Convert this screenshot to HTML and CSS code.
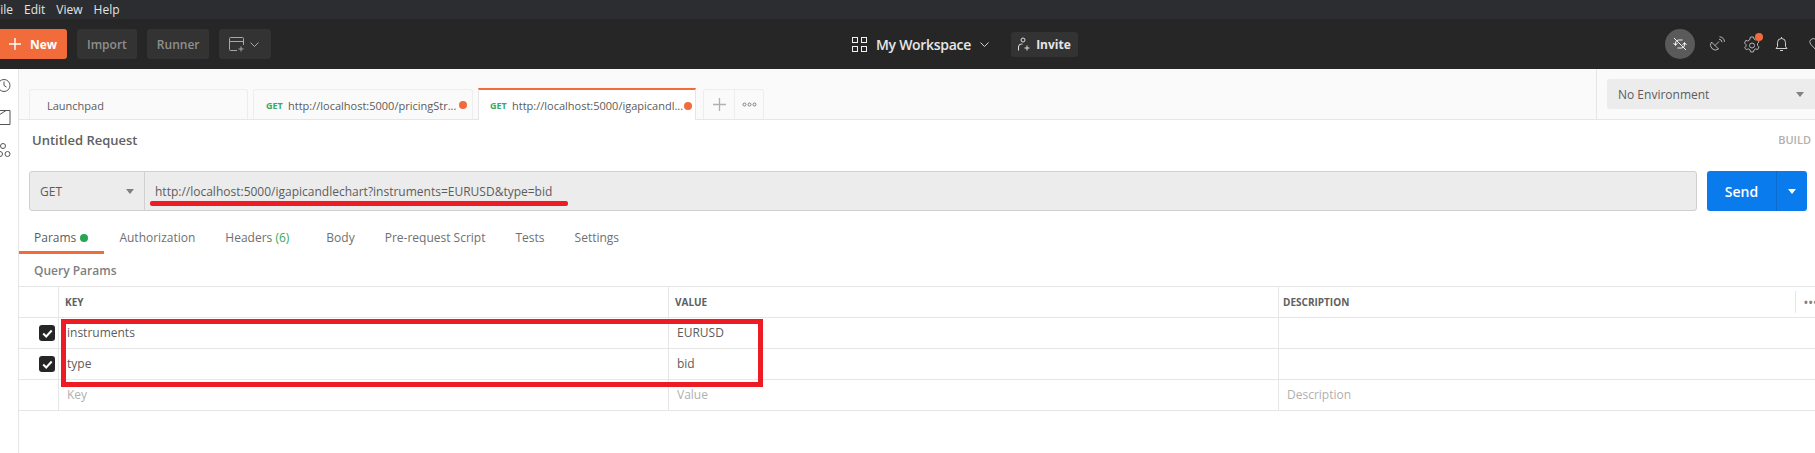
FILE: index.html
```html
<!DOCTYPE html>
<html>
<head>
    <title>Postman</title>
    <link rel="stylesheet" href="styles.css">
</head>
<body>
    <div class="menu-bar">
        <span class="menu-file">File</span>
        <span>Edit</span>
        <span>View</span>
        <span>Help</span>
    </div>

    <div class="top-bar">
        <div class="top-left">
            <button class="btn-new">
                <svg width="14" height="14" viewBox="0 0 14 14"><path d="M7 1v12M1 7h12" stroke="#fff" stroke-width="1.4" fill="none"/></svg>
                New
            </button>
            <button class="btn-dark">Import</button>
            <button class="btn-dark">Runner</button>
            <button class="btn-dark btn-window">
                <svg width="16" height="15" viewBox="0 0 16 15" fill="none" stroke="#a8a8a8"><path d="M8 13.5H1.5a1 1 0 0 1-1-1v-11a1 1 0 0 1 1-1h12a1 1 0 0 1 1 1V8M.5 4.5h14M12 9.5v5M9.5 12h5"/></svg>
                <svg width="9" height="5" viewBox="0 0 9 5" fill="none" stroke="#a8a8a8"><path d="M.5.5l4 4 4-4"/></svg>
            </button>
        </div>
        <div class="workspace">
            <svg class="ws-icon" width="15" height="15" viewBox="0 0 15 15" fill="none" stroke="#f0f0f0"><rect x=".5" y=".5" width="5" height="5"/><rect x="9.5" y=".5" width="5" height="5"/><rect x=".5" y="9.5" width="5" height="5"/><rect x="9.5" y="9.5" width="5" height="5"/></svg>
            <span class="ws-name">My Workspace</span>
            <svg width="9" height="5" viewBox="0 0 9 5" fill="none" stroke="#d0d0d0"><path d="M.5.5l4 4 4-4"/></svg>
            <button class="btn-invite">
                <svg width="12" height="14" viewBox="0 0 12 14" fill="none" stroke="#e0e0e0"><circle cx="5" cy="3" r="2"/><path d="M.5 13.5V10a3 3 0 0 1 3-3h1M9 8.5v5M6.5 11h5"/></svg>
                Invite
            </button>
        </div>
        <div class="top-right">
            <span class="sync-off">
                <svg width="16" height="14" viewBox="0 0 16 14" fill="none" stroke="#f0f0f0"><path d="M2 1l12 12M3.500 8V6a3 3 0 0 1 3-3h4M1.500 6l2 2.500 2-2.500M12.500 6v2a3 3 0 0 1-3 3h-4M10.500 8l2-2.500 2 2.500"/></svg>
            </span>
            <svg class="ico-sat" width="16" height="16" viewBox="0 0 16 16" fill="none" stroke="#b5b5b5"><path d="M2.500 6a5 5 0 0 0 7 7zM6 9.500l4-4M10 3.200a3.200 3.200 0 0 1 3 3M10.500.8a5.500 5.500 0 0 1 5 5"/></svg>
            <span class="gear-wrap">
                <svg width="16" height="17" viewBox="0 0 16 17" fill="none" stroke="#b5b5b5"><path d="M6.500 1h3l.5 2 1.700 1 2-.6 1.300 2.600-1.500 1.500v1.900l1.500 1.500-1.300 2.600-2-.6-1.700 1-.5 2h-3l-.5-2-1.700-1-2 .6L.5 11.900 2 10.400V8.500L.5 7l1.300-2.600 2 .6L5.500 4z"/><circle cx="8" cy="9.500" r="2.500"/></svg>
                <span class="gear-badge"></span>
            </span>
            <svg class="ico-bell" width="13" height="16" viewBox="0 0 13 16" fill="none" stroke="#d0d0d0"><path d="M1 12.500h11l-1.500-2V6.500a4 4 0 0 0-8 0v4zM5 14.500h3M6.500 1v1.500"/></svg>
            <svg class="ico-heart" width="14" height="14" viewBox="0 0 14 14" fill="none" stroke="#b5b5b5"><path d="M7 13L1.500 7a3.300 3.300 0 0 1 5.500-4 3.300 3.300 0 0 1 5.500 4z"/></svg>
        </div>
    </div>

    <div class="main">
        <div class="sidebar">
            <svg width="11" height="15" viewBox="0 0 11 15" fill="none" stroke="#555"><circle cx="4" cy="7.500" r="6"/><path d="M4 3.500V7.500l2.500 1.500"/></svg>
            <svg width="11" height="15" viewBox="0 0 11 15" fill="none" stroke="#555"><path d="M-1 .5h11v14h-11M-1 5l7-4.500"/></svg>
            <svg width="11" height="17" viewBox="0 0 11 17" fill="none" stroke="#555"><circle cx="3" cy="4" r="2.500"/><circle cx="0" cy="12" r="2.500"/><circle cx="7.500" cy="12" r="2.500"/></svg>
        </div>

        <div class="content">
            <div class="tab-strip">
                <div class="tabs">
                    <div class="tab tab-launchpad">Launchpad</div>
                    <div class="tab tab-req tab-pricing">
                        <span class="get">GET</span>
                        <span class="tab-url">http://localhost:5000/pricingStr...</span>
                        <span class="dot"></span>
                    </div>
                    <div class="tab tab-req tab-active">
                        <span class="get">GET</span>
                        <span class="tab-url">http://localhost:5000/igapicandl...</span>
                        <span class="dot"></span>
                    </div>
                    <div class="tab-tools">
                        <span class="tool">
                            <svg width="15" height="15" viewBox="0 0 15 15"><path d="M7.500 1v13M1 7.500h13" stroke="#b0b0b0" stroke-width="1.300" fill="none"/></svg>
                        </span>
                        <span class="tool tool-more">
                            <svg width="15" height="5" viewBox="0 0 15 5" fill="none" stroke="#808080"><circle cx="2.500" cy="2.500" r="1.500"/><circle cx="7.500" cy="2.500" r="1.500"/><circle cx="12.500" cy="2.500" r="1.500"/></svg>
                        </span>
                    </div>
                </div>
                <div class="env-box">
                    <div class="env-select">
                        <span>No Environment</span>
                        <span class="caret"></span>
                    </div>
                </div>
            </div>

            <div class="title-row">
                <span class="req-title">Untitled Request</span>
                <span class="build">BUILD</span>
            </div>

            <div class="url-row">
                <div class="url-bar">
                    <div class="method"><span>GET</span><span class="caret"></span></div>
                    <div class="url-text">http://localhost:5000/igapicandlechart?instruments=EURUSD&amp;type=bid</div>
                </div>
                <div class="send">
                    <span class="send-label">Send</span>
                    <span class="send-drop"><span class="caret caret-white"></span></span>
                </div>
            </div>

            <div class="req-tabs">
                <span class="req-tab req-tab-active">Params <i class="green-dot"></i></span>
                <span class="req-tab">Authorization</span>
                <span class="req-tab">Headers <em>(6)</em></span>
                <span class="req-tab">Body</span>
                <span class="req-tab">Pre-request Script</span>
                <span class="req-tab">Tests</span>
                <span class="req-tab">Settings</span>
            </div>

            <div class="query-title">Query Params</div>

            <div class="params">
                <div class="row row-head">
                    <div class="cell cell-check"></div>
                    <div class="cell">KEY</div>
                    <div class="cell">VALUE</div>
                    <div class="cell cell-desc">
                        <span>DESCRIPTION</span>
                        <span class="more-dots">•••</span>
                    </div>
                </div>
                <div class="row">
                    <div class="cell cell-check"><span class="check"><svg width="11" height="9" viewBox="0 0 11 9"><path d="M1.200 4.500l3 3 5.500-6" stroke="#fff" stroke-width="2" fill="none"/></svg></span></div>
                    <div class="cell">instruments</div>
                    <div class="cell">EURUSD</div>
                    <div class="cell"></div>
                </div>
                <div class="row">
                    <div class="cell cell-check"><span class="check"><svg width="11" height="9" viewBox="0 0 11 9"><path d="M1.200 4.500l3 3 5.500-6" stroke="#fff" stroke-width="2" fill="none"/></svg></span></div>
                    <div class="cell">type</div>
                    <div class="cell">bid</div>
                    <div class="cell"></div>
                </div>
                <div class="row row-empty">
                    <div class="cell cell-check"></div>
                    <div class="cell">Key</div>
                    <div class="cell">Value</div>
                    <div class="cell">Description</div>
                </div>
            </div>
        </div>
    </div>

    <!-- red marks drawn on top of the screenshot -->
    <div class="mark-line"></div>
    <div class="mark-box"></div>
</body>
</html>
```

FILE: styles.css
```css
html, body {
    margin: 0;
    height: 453px;
    overflow: hidden;
}
body {
    position: relative;
    width: 1815px;
    font-family: "Open Sans", "Liberation Sans", sans-serif;
    font-size: 12px;
    color: #5c5c5c;
    background: #fff;
}
button {
    font-family: inherit;
    border: 0;
    padding: 0;
}

/* title bar */
.menu-bar {
    height: 19px;
    background: #2b2d30;
    color: #e4e4e4;
    display: flex;
    align-items: center;
    gap: 11px;
    font-size: 12px;
}
.menu-file {
    margin-left: -6px;
}

/* header */
.top-bar {
    height: 50px;
    background: #262626;
    display: flex;
    align-items: center;
}
.top-left {
    display: flex;
    align-items: center;
    gap: 10px;
    width: 852px;
    flex: none;
}
.btn-new {
    width: 67px;
    height: 30px;
    background: #f26b3a;
    color: #fff;
    font-size: 12px;
    font-weight: 700;
    border-radius: 0 3px 3px 0;
    display: flex;
    align-items: center;
    justify-content: flex-end;
    gap: 8px;
    padding-right: 10px;
    box-sizing: border-box;
}
.btn-dark {
    height: 30px;
    padding: 0 10px;
    background: #333;
    color: #8f8f8f;
    font-size: 12px;
    font-weight: 600;
    border-radius: 3px;
}
.btn-window {
    width: 52px;
    display: flex;
    align-items: center;
    gap: 5px;
}
.workspace {
    display: flex;
    align-items: center;
    width: 813px;
    flex: none;
}
.ws-icon {
    margin-right: 9px;
}
.ws-name {
    color: #e6e6e6;
    font-size: 14px;
    font-weight: 600;
    letter-spacing: -0.3px;
    margin-right: 9px;
}
.btn-invite {
    margin-left: 22px;
    width: 67px;
    height: 25px;
    background: #333;
    color: #e6e6e6;
    font-size: 12px;
    font-weight: 700;
    border-radius: 3px;
    display: flex;
    align-items: center;
    justify-content: center;
    gap: 6px;
}
.top-right {
    display: flex;
    align-items: center;
    flex: none;
}
.sync-off {
    width: 30px;
    height: 30px;
    border-radius: 50%;
    background: #5a5a5a;
    display: flex;
    align-items: center;
    justify-content: center;
}
.ico-sat {
    margin-left: 14px;
}
.gear-wrap {
    position: relative;
    margin-left: 19px;
    display: flex;
}
.gear-badge {
    position: absolute;
    top: -3px;
    right: -3px;
    width: 8px;
    height: 8px;
    border-radius: 50%;
    background: #f26b3a;
}
.ico-bell {
    margin-left: 15px;
}
.ico-heart {
    margin-left: 21px;
    flex: none;
}

/* main area */
.main {
    display: flex;
    height: 384px;
}
.sidebar {
    width: 18px;
    flex: none;
    border-right: 1px solid #e6e6e6;
    display: flex;
    flex-direction: column;
    padding-top: 9px;
    gap: 17px;
}
.sidebar svg {
    display: block;
    overflow: visible;
}
.content {
    flex: 1;
    min-width: 0;
}

/* tab strip */
.tab-strip {
    height: 51px;
    box-sizing: border-box;
    background: #fafafa;
    border-bottom: 1px solid #e6e6e6;
    display: flex;
}
.tabs {
    display: flex;
    align-items: flex-end;
    width: 1577px;
    flex: none;
    padding-left: 10px;
    box-sizing: border-box;
    gap: 5px;
}
.tab {
    height: 30px;
    box-sizing: border-box;
    border: 1px solid #ededed;
    border-bottom: 0;
    border-radius: 3px 3px 0 0;
    display: flex;
    align-items: center;
    font-size: 11px;
    padding-top: 1px;
}
.tab-launchpad {
    width: 219px;
    padding-left: 17px;
}
.tab-req {
    padding-left: 12px;
}
.tab-pricing {
    width: 220px;
}
.tab-active {
    width: 218px;
    margin-bottom: -1px;
    height: 32px;
    padding-left: 11px;
    background: #fff;
    border: 1px solid #e6e6e6;
    border-bottom: 0;
    border-top: 2px solid #f26b3a;
    border-radius: 0;
}
.get {
    color: #3aa860;
    font-size: 9px;
    font-weight: 700;
    margin-right: 5px;
    width: 17px;
}
.tab-url {
    width: 171px;
    white-space: nowrap;
    overflow: hidden;
}
.tab-active .tab-url {
    width: 172px;
}
.dot {
    width: 8px;
    height: 8px;
    border-radius: 50%;
    background: #f26b3a;
    flex: none;
}
.tab-tools {
    display: flex;
    height: 30px;
    box-sizing: border-box;
    margin-left: 2px;
    border: 1px solid #ededed;
    border-bottom: 0;
    border-radius: 3px 3px 0 0;
}
.tool {
    width: 30px;
    display: flex;
    align-items: center;
    justify-content: center;
}
.tool-more {
    border-left: 1px solid #ededed;
    width: 28px;
}
.env-box {
    flex: none;
    width: 218px;
    border-left: 1px solid #e6e6e6;
    padding: 10px 0 0 10px;
    box-sizing: border-box;
}
.env-select {
    width: 230px;
    height: 30px;
    background: #ececec;
    border-radius: 3px;
    display: flex;
    align-items: center;
    padding-left: 11px;
    box-sizing: border-box;
}
.env-select .caret {
    margin-left: 87px;
}
.caret {
    width: 0;
    height: 0;
    border-left: 4px solid transparent;
    border-right: 4px solid transparent;
    border-top: 5px solid #808080;
}
.caret-white {
    border-top-color: #fff;
}

/* request title */
.title-row {
    height: 51px;
    display: flex;
    align-items: center;
    justify-content: space-between;
    padding: 0 4px 12px 13px;
    box-sizing: border-box;
}
.req-title {
    font-size: 13px;
    font-weight: 600;
    color: #606060;
}
.build {
    font-weight: 600;
    font-size: 11px;
    color: #b0b0b0;
}

/* url bar */
.url-row {
    height: 40px;
    display: flex;
    padding-left: 10px;
}
.url-bar {
    width: 1668px;
    box-sizing: border-box;
    background: #ececec;
    border: 1px solid #d0d0d0;
    border-radius: 3px;
    display: flex;
    align-items: center;
}
.method {
    width: 115px;
    height: 100%;
    box-sizing: border-box;
    border-right: 1px solid #d0d0d0;
    padding: 0 10px;
    display: flex;
    align-items: center;
    justify-content: space-between;
}
.url-text {
    padding-left: 10px;
}
.send {
    margin-left: 10px;
    width: 100px;
    background: #097bed;
    border-radius: 3px;
    color: #fff;
    display: flex;
    align-items: center;
    font-size: 14px;
    font-weight: 600;
}
.send-label {
    width: 69px;
    text-align: center;
}
.send-drop {
    flex: 1;
    height: 100%;
    border-left: 1px solid #0a6cce;
    display: flex;
    align-items: center;
    justify-content: center;
}

/* request tabs */
.req-tabs {
    height: 43px;
    display: flex;
    align-items: center;
    padding: 9px 0 0 15px;
    box-sizing: border-box;
    gap: 30px;
    font-size: 12px;
    position: relative;
}
.req-tab {
    color: #707070;
    white-space: nowrap;
}
.req-tab em {
    font-style: normal;
    color: #3aa860;
    margin-right: 7px;
}
.req-tab-active {
    color: #5c5c5c;
}
.req-tab-active::after {
    content: "";
    position: absolute;
    left: 0;
    bottom: 0;
    width: 85px;
    height: 3px;
    background: #f26b3a;
}
.green-dot {
    display: inline-block;
    width: 8px;
    height: 8px;
    margin: 0 1px;
    border-radius: 50%;
    background: #26a650;
}
.query-title {
    height: 32px;
    line-height: 33px;
    padding-left: 15px;
    font-size: 12px;
    font-weight: 600;
    color: #808080;
}

/* params table */
.params {
    border-top: 1px solid #e6e6e6;
}
.row {
    display: grid;
    grid-template-columns: 40px 610px 610px 1fr;
    height: 31px;
    box-sizing: border-box;
    border-bottom: 1px solid #e6e6e6;
}
.cell {
    border-right: 1px solid #e6e6e6;
    padding: 0 0 1px 8px;
    display: flex;
    align-items: center;
    font-size: 12px;
    min-width: 0;
}
.cell:last-child {
    border-right: 0;
}
.row-head {
    font-weight: 700;
    color: #606060;
}
.row-head .cell {
    font-size: 10px;
    padding: 0 0 0 6px;
}
.row-head .cell-desc {
    padding-left: 4px;
}
.cell-desc span:first-child {
    width: 512px;
    flex: none;
    height: 22px;
    line-height: 22px;
    border-right: 1px solid #e6e6e6;
}
.more-dots {
    padding-left: 8px;
    font-size: 10px;
    letter-spacing: 1px;
    color: #808080;
}
.row .cell-check {
    padding: 0 0 0 20px;
}
.row-empty .cell {
    color: #b0b0b0;
}
.check {
    width: 16px;
    height: 16px;
    background: #262626;
    border-radius: 3px;
    display: flex;
    align-items: center;
    justify-content: center;
}

/* annotations */
.mark-line {
    position: absolute;
    left: 150px;
    top: 201px;
    width: 418px;
    height: 5px;
    border-radius: 2px;
    background: #ed1c24;
}
.mark-box {
    position: absolute;
    left: 61px;
    top: 319px;
    width: 702px;
    height: 68px;
    box-sizing: border-box;
    border: 5px solid #ed1c24;
}
```
